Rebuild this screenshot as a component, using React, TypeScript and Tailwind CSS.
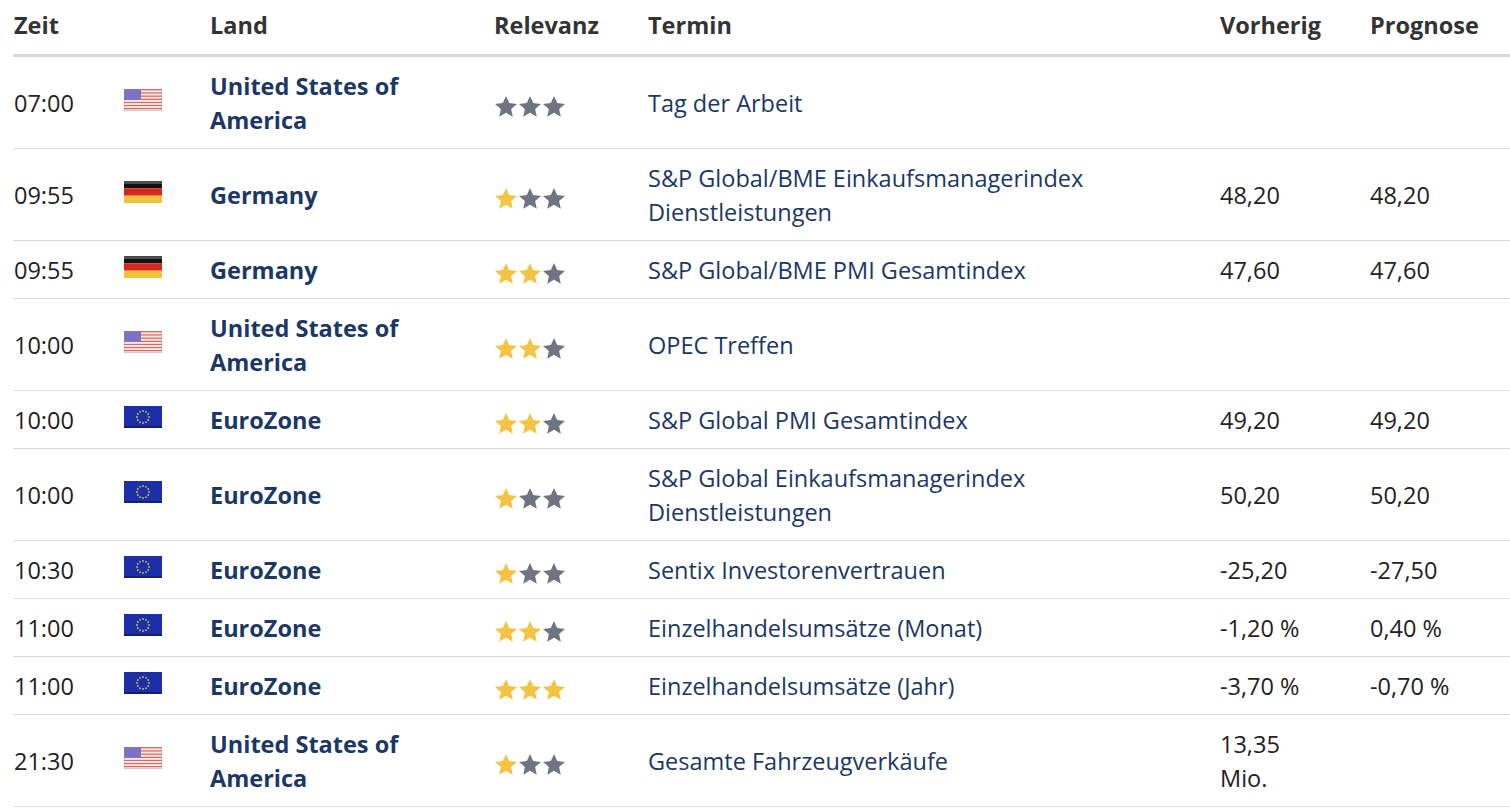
type Row = {
  time: string;
  flag: "us" | "de" | "eu";
  land: string;
  stars: number;
  termin: string;
  prev?: string;
  prog?: string;
};

const rows: Row[] = [
  { time: "07:00", flag: "us", land: "United States of America", stars: 0, termin: "Tag der Arbeit" },
  { time: "09:55", flag: "de", land: "Germany", stars: 1, termin: "S&P Global/BME Einkaufsmanagerindex Dienstleistungen", prev: "48,20", prog: "48,20" },
  { time: "09:55", flag: "de", land: "Germany", stars: 2, termin: "S&P Global/BME PMI Gesamtindex", prev: "47,60", prog: "47,60" },
  { time: "10:00", flag: "us", land: "United States of America", stars: 2, termin: "OPEC Treffen" },
  { time: "10:00", flag: "eu", land: "EuroZone", stars: 2, termin: "S&P Global PMI Gesamtindex", prev: "49,20", prog: "49,20" },
  { time: "10:00", flag: "eu", land: "EuroZone", stars: 1, termin: "S&P Global Einkaufsmanagerindex Dienstleistungen", prev: "50,20", prog: "50,20" },
  { time: "10:30", flag: "eu", land: "EuroZone", stars: 1, termin: "Sentix Investorenvertrauen", prev: "-25,20", prog: "-27,50" },
  { time: "11:00", flag: "eu", land: "EuroZone", stars: 2, termin: "Einzelhandelsumsätze (Monat)", prev: "-1,20 %", prog: "0,40 %" },
  { time: "11:00", flag: "eu", land: "EuroZone", stars: 3, termin: "Einzelhandelsumsätze (Jahr)", prev: "-3,70 %", prog: "-0,70 %" },
  { time: "21:30", flag: "us", land: "United States of America", stars: 1, termin: "Gesamte Fahrzeugverkäufe", prev: "13,35 Mio." },
];

function Flag({ kind }: { kind: Row["flag"] }) {
  if (kind === "de") {
    return (
      <svg width="38" height="22" viewBox="0 0 38 22">
        <rect width="38" height="7.3" fill="#111" />
        <rect y="7.3" width="38" height="7.4" fill="#d8261c" />
        <rect y="14.7" width="38" height="7.3" fill="#f0c43a" />
        <rect width="38" height="3" fill="#fff" opacity="0.25" />
      </svg>
    );
  }
  if (kind === "eu") {
    const dots = Array.from({ length: 12 }, (_, i) => {
      const a = (i / 12) * Math.PI * 2;
      return <circle key={i} cx={19 + Math.cos(a) * 6} cy={11 + Math.sin(a) * 6} r="0.9" fill="#d9c23a" />;
    });
    return (
      <svg width="38" height="22" viewBox="0 0 38 22">
        <rect width="38" height="22" fill="#1d2fa8" />
        {dots}
        <rect y="20" width="38" height="2" fill="#141f6e" />
      </svg>
    );
  }
  return (
    <svg width="38" height="22" viewBox="0 0 38 22">
      {Array.from({ length: 7 }, (_, i) => (
        <rect key={i} y={i * 3.15} width="38" height="1.6" fill="#e2645a" />
      ))}
      {Array.from({ length: 7 }, (_, i) => (
        <rect key={"w" + i} y={i * 3.15 + 1.6} width="38" height="1.55" fill="#f6e9e6" />
      ))}
      <rect width="17" height="11" fill="#7a73c8" />
      <rect width="38" height="22" fill="none" stroke="#9a8a8a" strokeWidth="0.6" />
    </svg>
  );
}

function Stars({ n }: { n: number }) {
  return (
    <div className="flex gap-0 pt-[6px]">
      {[0, 1, 2].map((i) => (
        <svg key={i} width="24" height="23" viewBox="0 0 24 23">
          <path
            d="M12 1l3.2 7.1 7.8.8-5.9 5.2 1.7 7.6L12 17.8 5.2 21.7l1.7-7.6L1 8.9l7.8-.8z"
            fill={i < n ? "#f4c343" : "#6e7580"}
          />
        </svg>
      ))}
    </div>
  );
}

export default function App() {
  return (
    <div className="w-[1510px] bg-white pl-[13px] text-[23.5px] leading-[34px] text-[#222]" style={{ fontFamily: '"Open Sans", "Noto Sans", sans-serif' }}>
      <table className="w-[1497px] table-fixed border-collapse">
        <colgroup>
          <col className="w-[111px]" />
          <col className="w-[86px]" />
          <col className="w-[284px]" />
          <col className="w-[154px]" />
          <col className="w-[572px]" />
          <col className="w-[150px]" />
          <col />
        </colgroup>
        <thead>
          <tr className="border-b-[3px] border-[#d9d9d9] text-left text-[#333]">
            <th className="pb-[12px] pt-[8px] pl-[1px] font-bold">Zeit</th>
            <th></th>
            <th className="pb-[12px] pt-[8px] font-bold">Land</th>
            <th className="pb-[12px] pt-[8px] font-bold">Relevanz</th>
            <th className="pb-[12px] pt-[8px] font-bold">Termin</th>
            <th className="pb-[12px] pt-[8px] font-bold">Vorherig</th>
            <th className="pb-[12px] pt-[8px] font-bold">Prognose</th>
          </tr>
        </thead>
        <tbody>
          {rows.map((r, i) => (
            <tr key={i} className="border-b border-[#dcdcdc] align-middle">
              <td className="pt-[12px] pb-[11px] pl-[1px]">{r.time}</td>
              <td className="pt-[12px] pb-[11px]">
                <div className="-mt-[6px]"><Flag kind={r.flag} /></div>
              </td>
              <td className="pt-[12px] pb-[11px] pr-[70px] font-bold text-[#1b3766]">{r.land}</td>
              <td className="pt-[12px] pb-[11px]"><Stars n={r.stars} /></td>
              <td className="pt-[12px] pb-[11px] pr-[90px] text-[#1b3766]">{r.termin}</td>
              <td className="pt-[12px] pb-[11px] pr-[40px]">{r.prev}</td>
              <td className="pt-[12px] pb-[11px]">{r.prog}</td>
            </tr>
          ))}
        </tbody>
      </table>
    </div>
  );
}
